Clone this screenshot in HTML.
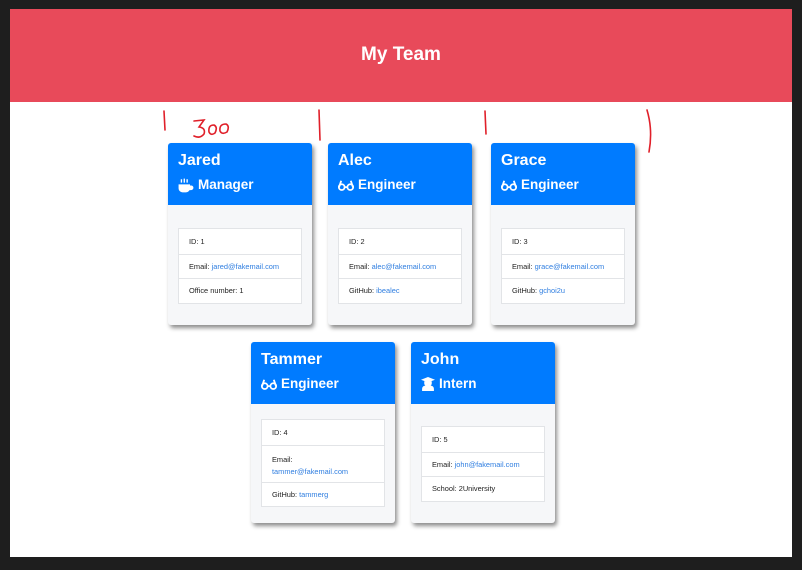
<!DOCTYPE html>
<html><head><meta charset="utf-8"><style>
*{margin:0;padding:0;box-sizing:border-box}
body{width:802px;height:570px;background:#1e1e1e;position:relative;overflow:hidden;font-family:"Liberation Sans",sans-serif}
#page{position:absolute;left:10px;top:9px;width:782px;height:548px;background:#fff}
#hdr{position:absolute;left:0;top:0;width:782px;height:93px;background:#e84a5a;color:#fff;font-weight:bold;font-size:19px;text-align:center;line-height:92px}
.card{position:absolute;width:144px;background:#f6f7f9;box-shadow:2px 3px 4px rgba(0,0,0,.45);border-radius:3px}
.ch{background:#007bff;color:#fff;height:62px;padding:9px 0 0 10px;border-radius:3px 3px 0 0}
.nm{font-size:16px;font-weight:bold;line-height:18px}
.rl{font-size:13.5px;font-weight:bold;line-height:16px;margin-top:7px;display:flex;align-items:center}
.rl svg{margin-right:4px}
.ul{position:absolute;left:10px;width:124px;background:#fff;border:1px solid #e2e4e7;font-size:7.4px;color:#222}
.li{padding:0 10px;height:24.5px;display:flex;align-items:center;border-top:1px solid #e2e4e7}
.li:first-child{border-top:none}
.li.t{height:37px;display:block;padding-top:8px;line-height:12px}
a{color:#2f7ee0;text-decoration:none}
</style></head><body>
<div id="page">
<div id="hdr">My Team</div>
</div>
<svg style="position:absolute;left:0;top:0" width="802" height="570">
<g stroke="#e0202a" stroke-width="1.6" fill="none" stroke-linecap="round">
<path d="M164 111 L165 130"/>
<path d="M319 110 L320 140"/>
<path d="M485 111 L486 134"/>
<path d="M647 110 Q653 130 649 152"/>
<path d="M194 121 L204 120 L199 127 Q206 128 204 134 Q200 139 194 136"/>
<path d="M214 125 Q208 125 209 132 Q211 136 215 133 Q218 127 214 125Z"/>
<path d="M226 124 Q219 124 220 131 Q222 135 227 132 Q230 126 226 124Z"/>
</g></svg>

<div class="card" style="left:168px;top:143px;height:182px">
<div class="ch"><div class="nm">Jared</div><div class="rl"><svg width="16" height="15" viewBox="0 0 14 13"><path d="M1 6h9v3a3 3 0 0 1-3 3H4a3 3 0 0 1-3-3z M10 7h1.5a1.5 1.5 0 0 1 0 3H10" fill="#fff" stroke="#fff" stroke-width="1"/><path d="M3 1v3M5.5 0.5v3.5M8 1v3" stroke="#fff" stroke-width="1.2"/></svg>Manager</div></div>
<div class="ul" style="top:85px"><div class="li">ID: 1</div><div class="li">Email:&nbsp;<a>jared@fakemail.com</a></div><div class="li">Office number: 1</div></div>
</div>

<div class="card" style="left:328px;top:143px;height:182px">
<div class="ch"><div class="nm">Alec</div><div class="rl"><svg width="16" height="14" viewBox="0 0 15 12"><g stroke="#fff" stroke-width="1.7" fill="none"><circle cx="3.5" cy="8" r="2.7"/><circle cx="11.5" cy="8" r="2.7"/><path d="M6 8h3M1 8L3 2M14 8L12 2"/></g></svg>Engineer</div></div>
<div class="ul" style="top:85px"><div class="li">ID: 2</div><div class="li">Email:&nbsp;<a>alec@fakemail.com</a></div><div class="li">GitHub:&nbsp;<a>ibealec</a></div></div>
</div>

<div class="card" style="left:491px;top:143px;height:182px">
<div class="ch"><div class="nm">Grace</div><div class="rl"><svg width="16" height="14" viewBox="0 0 15 12"><g stroke="#fff" stroke-width="1.7" fill="none"><circle cx="3.5" cy="8" r="2.7"/><circle cx="11.5" cy="8" r="2.7"/><path d="M6 8h3M1 8L3 2M14 8L12 2"/></g></svg>Engineer</div></div>
<div class="ul" style="top:85px"><div class="li">ID: 3</div><div class="li">Email:&nbsp;<a>grace@fakemail.com</a></div><div class="li">GitHub:&nbsp;<a>gchoi2u</a></div></div>
</div>

<div class="card" style="left:251px;top:342px;height:181px">
<div class="ch"><div class="nm">Tammer</div><div class="rl"><svg width="16" height="14" viewBox="0 0 15 12"><g stroke="#fff" stroke-width="1.7" fill="none"><circle cx="3.5" cy="8" r="2.7"/><circle cx="11.5" cy="8" r="2.7"/><path d="M6 8h3M1 8L3 2M14 8L12 2"/></g></svg>Engineer</div></div>
<div class="ul" style="top:77px"><div class="li">ID: 4</div><div class="li t">Email:<br><a>tammer@fakemail.com</a></div><div class="li">GitHub:&nbsp;<a>tammerg</a></div></div>
</div>

<div class="card" style="left:411px;top:342px;height:181px">
<div class="ch"><div class="nm">John</div><div class="rl"><svg width="14" height="14" viewBox="0 0 13 13"><path d="M6.5 0L13 2.5 6.5 5 0 2.5z" fill="#fff"/><path d="M3 4h7v2a3.5 3 0 0 1-7 0z" fill="#fff"/><path d="M1 13v-2a3 3 0 0 1 3-3h5a3 3 0 0 1 3 3v2z" fill="#fff"/></svg>Intern</div></div>
<div class="ul" style="top:84px"><div class="li">ID: 5</div><div class="li">Email:&nbsp;<a>john@fakemail.com</a></div><div class="li">School: 2University</div></div>
</div>
</body></html>
